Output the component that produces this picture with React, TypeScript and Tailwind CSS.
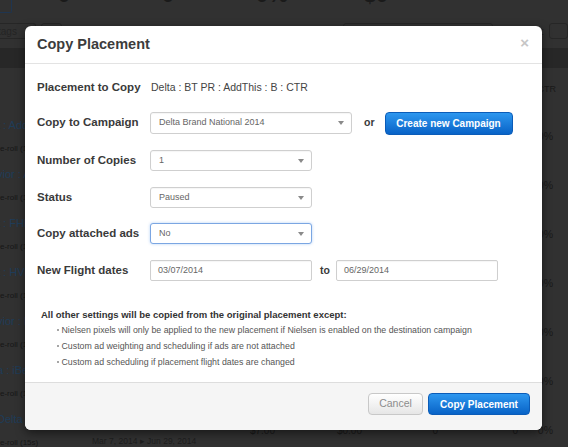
import React from "react";

function Arrow() {
  return (
    <svg width="6" height="4" viewBox="0 0 6 4" className="shrink-0">
      <polygon points="0,0 6,0 3,4" fill="#8a8a8a" />
    </svg>
  );
}

function Select({ w, text, focus }: { w: string; text: string; focus?: boolean }) {
  return (
    <div
      className={
        "flex h-full items-center justify-between rounded-[3px] border bg-white pl-[8px] pr-[7px] text-[9px] text-[#666] " +
        w +
        (focus
          ? " border-[#7ba6e2] shadow-[0_0_3px_rgba(82,150,236,0.45)]"
          : " border-[#cfcfcf] shadow-[inset_0_1px_1px_rgba(0,0,0,0.04)]")
      }
    >
      <span>{text}</span>
      <Arrow />
    </div>
  );
}

function DateInput({ text }: { text: string }) {
  return (
    <div className="flex h-full w-[162px] items-center rounded-[2px] border border-[#cfcfcf] bg-white pl-[7px] text-[9px] text-[#666] shadow-[inset_0_1px_1px_rgba(0,0,0,0.04)]">
      {text}
    </div>
  );
}

function Label({ children }: { children: React.ReactNode }) {
  return <div className="w-[113px] shrink-0 text-[11.5px] font-bold text-[#3a3a3a]">{children}</div>;
}

const rows = [
  "t : AddThis : B : CTR",
  "vior : AddThis : B : CTR",
  "t : FHM : B : CTR",
  "t : HVN : B : CTR",
  "vior : Hulu : B : CTR",
  "a : iBeacon : B : CTR",
  "Delta Sky : B : CTR",
];

export default function App() {
  return (
    <div className="relative h-[447px] w-[568px] overflow-hidden bg-[#313131] font-['Liberation_Sans',Arial,sans-serif]">
      {/* stats strip */}
      <div className="flex h-[14px] overflow-hidden">
        <div className="h-[13px] w-[12px] shrink-0 rounded-br-[2px] border-r border-b border-[#1f3550]" />
        {["0", "0", "0%", "$0"].map((s, i) => (
          <div key={i} className="-mt-[16px] w-[104px] shrink-0 text-center text-[22px] font-bold leading-[22px] text-[#1a1a1a]">
            {s}
          </div>
        ))}
      </div>

      {/* filter row */}
      <div className="mt-[9px] flex h-[16px] items-stretch">
        <div className="flex w-[38px] items-center overflow-hidden rounded-r-[3px] border-y border-r border-[#262626] text-[10px] text-[#242424]">
          <span className="-ml-[2px]">tags</span>
        </div>
        <div className="ml-[5px] w-[23px] rounded-[3px] border border-[#262626]" />
        <div className="ml-[281px] w-[159px] rounded-[3px] border border-[#262626]" />
        <div className="ml-[35px] flex items-center text-[10px] text-[#1a1a1a]">tus:</div>
        <div className="ml-[5px] w-[20px] rounded-[3px] border border-[#262626]" />
      </div>

      {/* table header band */}
      <div className="mt-[9px] h-[20px] bg-[#272727]" />
      <div className="flex h-[44px] items-center justify-end pr-[12px] text-[9px] text-[#1a1a1a]">CTR</div>

      {/* table rows */}
      {rows.map((t, i) => (
        <div key={i} className="flex h-[49px] items-center">
          <div className="flex w-[230px] shrink-0 flex-col gap-[10px] overflow-hidden">
            <div className="-ml-[3px] whitespace-nowrap text-[11px] leading-[14px] text-[#1f3c58]">{t}</div>
            <div className="flex items-center whitespace-nowrap leading-[14px]">
              <span className="-ml-[8px] w-[100px] shrink-0 text-[8px] text-[#161616]">Pre-roll (15s)</span>
              <span className="-mt-[4px] text-[8.5px] text-[#1e1e1e]">Mar 7, 2014 ▸ Jun 29, 2014</span>
            </div>
          </div>
          <div className="w-[45px] text-right text-[10px] text-[#1a1a1a]">$7.00</div>
          <div className="w-[87px] text-right text-[10px] text-[#1a1a1a]">$0.00</div>
          <div className="w-[76px] text-right text-[10px] text-[#1a1a1a]">0</div>
          <div className="w-[80px] text-right text-[10px] text-[#1a1a1a]">0</div>
          <div className="w-[35px] text-right text-[10.5px] text-[#1a1a1a]">0%</div>
        </div>
      ))}

      {/* modal */}
      <div className="absolute left-[25px] top-[26px] w-[517px] rounded-[6px] bg-white shadow-[0_3px_10px_rgba(0,0,0,0.5)]">
        <div className="flex h-[38px] items-center justify-between border-b border-[#e3e3e3] pl-[12px] pr-[13px]">
          <div className="text-[14.5px] font-bold text-[#3c3c3c]">Copy Placement</div>
          <div className="-mt-[4px] text-[15px] font-bold leading-none text-[#c6c6c6]">×</div>
        </div>

        <div className="px-[12px] pt-[13px] pb-[12px]">
          <div className="flex h-[22px] items-center">
            <Label>Placement to Copy</Label>
            <div className="ml-[1px] text-[10.5px] text-[#444]">Delta : BT PR : AddThis : B : CTR</div>
          </div>

          <div className="mt-[13px] flex h-[22px] items-center">
            <Label>Copy to Campaign</Label>
            <Select w="w-[202px]" text="Delta Brand National 2014" />
            <div className="ml-[12px] text-[10.5px] font-bold text-[#3a3a3a]">or</div>
            <div className="ml-[10px] flex h-[23px] w-[128px] items-center justify-center rounded-[4px] border border-[#0b5cb8] bg-linear-to-b from-[#2d97ef] to-[#0863c7] text-[10px] font-bold text-white">
              Create new Campaign
            </div>
          </div>

          <div className="mt-[16px] flex h-[21px] items-center">
            <Label>Number of Copies</Label>
            <Select w="w-[162px]" text="1" />
          </div>

          <div className="mt-[16px] flex h-[21px] items-center">
            <Label>Status</Label>
            <Select w="w-[162px]" text="Paused" />
          </div>

          <div className="mt-[15px] flex h-[21px] items-center">
            <Label>Copy attached ads</Label>
            <Select w="w-[162px]" text="No" focus />
          </div>

          <div className="mt-[16px] flex h-[21px] items-center">
            <Label>New Flight dates</Label>
            <DateInput text="03/07/2014" />
            <div className="ml-[8px] w-[16px] text-[10.5px] font-bold text-[#3a3a3a]">to</div>
            <DateInput text="06/29/2014" />
          </div>

          <div className="mt-[27px] pl-[4px]">
            <div className="text-[9.5px] font-bold leading-[14px] text-[#333]">
              All other settings will be copied from the original placement except:
            </div>
            {[
              "Nielsen pixels will only be applied to the new placement if Nielsen is enabled on the destination campaign",
              "Custom ad weighting and scheduling if ads are not attached",
              "Custom ad scheduling if placement flight dates are changed",
            ].map((b, i) => (
              <div key={i} className="flex items-center text-[8.8px] leading-[16px] text-[#555]">
                <span className="ml-[16px] h-[2px] w-[2px] shrink-0 rounded-full bg-[#888]" />
                <span className="ml-[2.5px]">{b}</span>
              </div>
            ))}
          </div>
        </div>

        <div className="flex justify-end gap-[5px] rounded-b-[6px] border-t border-[#dddddd] bg-[#f5f5f5] pt-[10px] pr-[12px] pb-[15px]">
          <div className="flex h-[22px] w-[55px] items-center justify-center rounded-[4px] border border-[#c8c8c8] bg-linear-to-b from-white to-[#e6e6e6] text-[10.5px] text-[#8c8c8c]">
            Cancel
          </div>
          <div className="flex h-[22px] w-[102px] items-center justify-center rounded-[4px] border border-[#0b5cb8] bg-linear-to-b from-[#2d97ef] to-[#0863c7] text-[10px] font-bold text-white">
            Copy Placement
          </div>
        </div>
      </div>
    </div>
  );
}
